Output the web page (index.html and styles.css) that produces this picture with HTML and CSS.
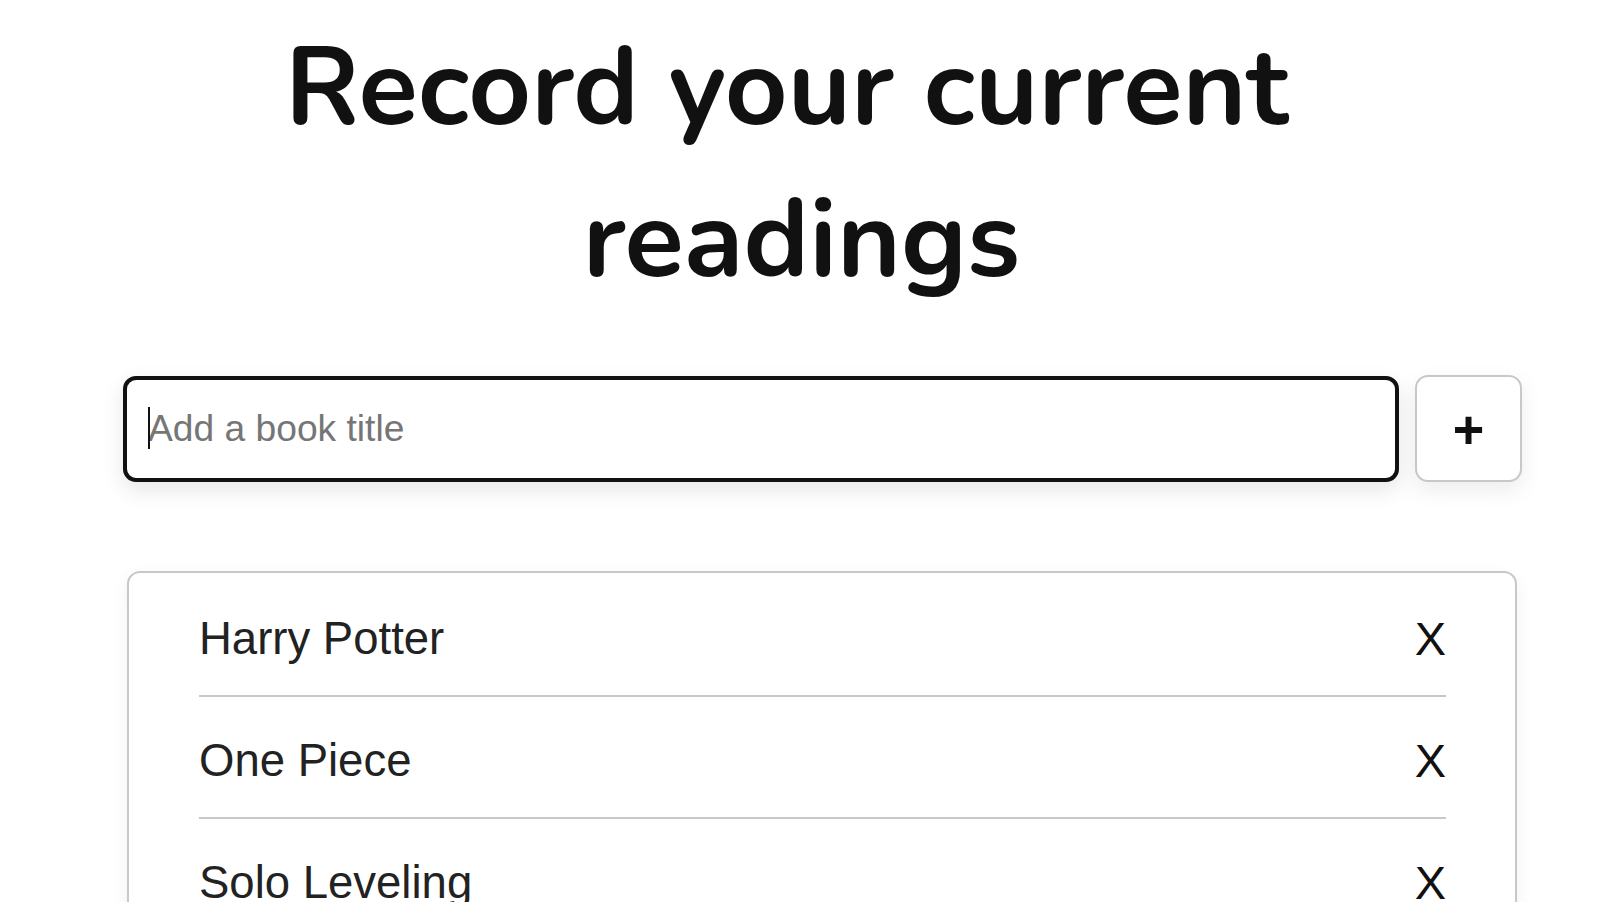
FILE: index.html
```html
<!DOCTYPE html>
<html lang="en">
<head>
<meta charset="utf-8">
<title>Reading list</title>
<link rel="stylesheet" href="styles.css">
</head>
<body>
<main class="page">
  <h1 class="title">Record your current&nbsp;<br>readings</h1>
  <div class="panel">
    <form class="add-form" onsubmit="return false">
      <div class="input-wrap">
        <input class="book-input" type="text" placeholder="Add a book title">
        <span class="caret" aria-hidden="true"></span>
      </div>
      <button class="add-btn" type="submit">+</button>
    </form>
    <ul class="book-list">
      <li class="book-item"><span class="book-title">Harry Potter</span><button class="remove-btn">X</button></li>
      <li class="book-item"><span class="book-title">One Piece</span><button class="remove-btn">X</button></li>
      <li class="book-item"><span class="book-title">Solo Leveling</span><button class="remove-btn">X</button></li>
    </ul>
  </div>
</main>
</body>
</html>
```
FILE: styles.css
```css
html, body {
  margin: 0;
  padding: 0;
  background: #ffffff;
  overflow: hidden;
  height: 100%;
}

.page {
  display: flex;
  flex-direction: column;
  align-items: center;
}

.title {
  margin: 12px 0 0 0;
  padding-right: 13px;
  font-family: "Nunito", "Lato", "Noto Sans", sans-serif;
  font-weight: 700;
  font-size: 109.3px;
  line-height: 152px;
  color: #111111;
  text-align: center;
}

.panel {
  align-self: flex-start;
  margin-left: 123px;
  width: 1399px;
  margin-top: 59px;
  display: flex;
  flex-direction: column;
}

.add-form {
  display: flex;
  align-items: center;
  gap: 16px;
  margin: 0;
}

.input-wrap {
  position: relative;
  display: flex;
}

.book-input {
  box-sizing: border-box;
  width: 1276px;
  height: 106px;
  border: 4px solid #111111;
  border-radius: 13px;
  padding: 0 0 0 21px;
  font-family: "Liberation Sans", Arial, sans-serif;
  font-size: 37.2px;
  color: #222;
  background: #fff;
  outline: none;
  box-shadow: 0 8px 22px rgba(0, 0, 0, 0.10);
}

.book-input::placeholder {
  color: #767676;
}

.caret {
  position: absolute;
  left: 25px;
  top: 31px;
  width: 2px;
  height: 42px;
  background: #111;
}

.add-btn {
  box-sizing: border-box;
  width: 107px;
  height: 107px;
  border: 2px solid #c8c8c8;
  border-radius: 13px;
  background: #fff;
  font-family: "Liberation Sans", Arial, sans-serif;
  font-weight: 700;
  font-size: 54px;
  line-height: 1;
  color: #111;
  padding: 0;
  box-shadow: 0 8px 22px rgba(0, 0, 0, 0.08);
  cursor: pointer;
}

.book-list {
  list-style: none;
  margin: 89px 0 0 4px;
  padding: 2px 0 0 0;
  width: 1390px;
  box-sizing: border-box;
  border: 2px solid #c8c8c8;
  border-radius: 13px;
  box-shadow: 0 6px 18px rgba(0, 0, 0, 0.06);
  background: #fff;
}

.book-item {
  display: flex;
  justify-content: space-between;
  align-items: center;
  margin: 0 69px 0 70px;
  padding: 37px 0 30px 0;
  border-bottom: 2px solid #c8c8c8;
  font-family: "Liberation Sans", Arial, sans-serif;
  font-size: 45.5px;
  line-height: 53px;
  color: #222;
}

.remove-btn {
  border: none;
  background: transparent;
  padding: 0;
  font-family: "Liberation Sans", Arial, sans-serif;
  font-size: 47px;
  line-height: 53px;
  color: #111;
  cursor: pointer;
}
```
